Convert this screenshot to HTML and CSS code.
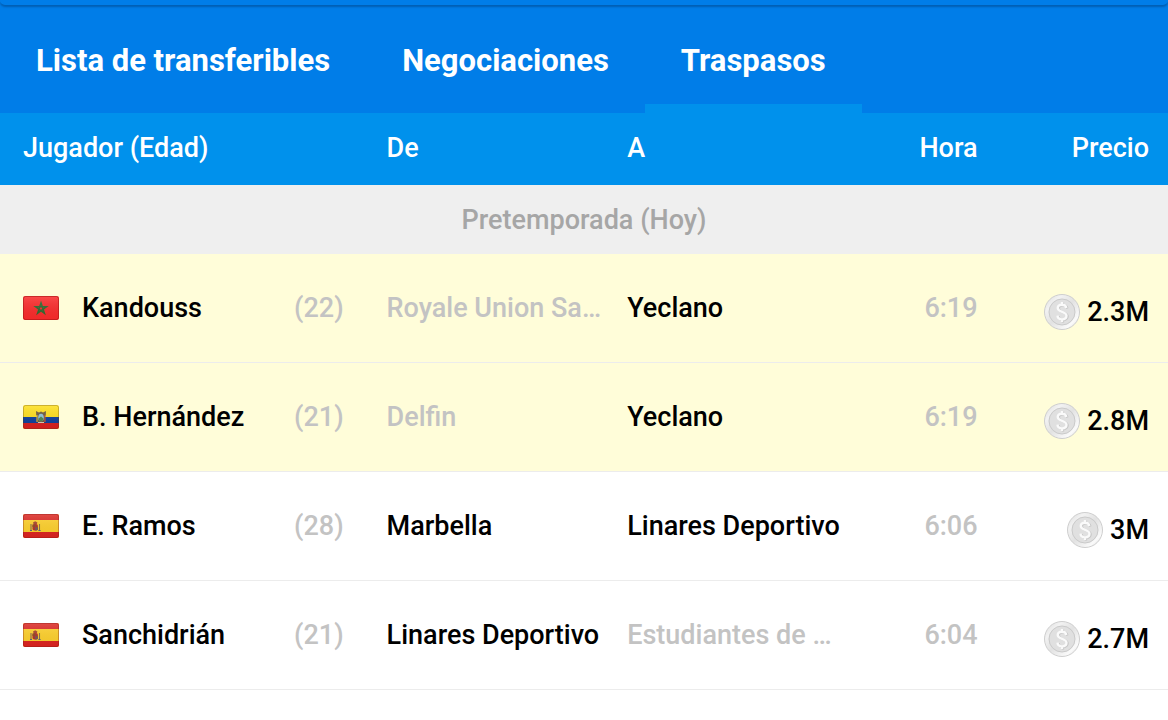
FILE: index.html
```
<!DOCTYPE html>
<html lang="es">
<head>
    <meta charset="utf-8">
    <title>Traspasos</title>
    <link rel="stylesheet" href="styles.css">
</head>
<body>
    <svg class="sprite" aria-hidden="true">
        <defs>
            <linearGradient id="gloss" x1="0" y1="0" x2="0" y2="1">
                <stop offset="0" stop-color="#fff" stop-opacity="0.15"/>
                <stop offset="1" stop-color="#000" stop-opacity="0.04"/>
            </linearGradient>
            <linearGradient id="rim" x1="0" y1="0" x2="1" y2="1">
                <stop offset="0" stop-color="#d8d8d8"/>
                <stop offset="0.25" stop-color="#f2f2f2"/>
                <stop offset="0.5" stop-color="#e2e2e2"/>
                <stop offset="0.8" stop-color="#fafafa"/>
                <stop offset="1" stop-color="#d0d0d0"/>
            </linearGradient>
            <clipPath id="flag-clip"><rect width="36" height="24" rx="2"/></clipPath>
        </defs>
        <symbol id="flag-ma" viewBox="0 0 36 24">
            <g clip-path="url(#flag-clip)">
                <rect width="36" height="24" fill="#fb2b2b"/>
                <path d="M18 6.8l3.4 10.4-8.8-6.4h10.8l-8.8 6.4z" fill="none" stroke="#2c6b2f" stroke-width="1.5"/>
                <rect width="36" height="24" fill="url(#gloss)"/>
                <rect x="0.5" y="0.5" width="35" height="23" rx="2" fill="none" stroke="#a81616" stroke-opacity="0.6"/>
            </g>
        </symbol>
        <symbol id="flag-ec" viewBox="0 0 36 24">
            <g clip-path="url(#flag-clip)">
                <rect width="36" height="24" fill="#ffe01c"/>
                <rect y="12" width="36" height="6" fill="#0c3f9c"/>
                <rect y="18" width="36" height="6" fill="#d8201f"/>
                <path d="M13 6l3 1.5 2-1 2 1 3-1.5-.2 4-1 1.5.7 5-2 1.5h-5l-2-1.5.7-5-1-1.5z" fill="#6d5a3c"/>
                <ellipse cx="18" cy="12.5" rx="2.8" ry="3.8" fill="#8fc3d9"/>
                <path d="M15.6 13.5l2.4-2 2.4 2-.8 2.4h-3.2z" fill="#4d8a4d"/>
                <path d="M14 10v7" stroke="#e6c23c" stroke-width="1"/>
                <path d="M22 10v7" stroke="#c9503a" stroke-width="1"/>
                <path d="M15 17.5h6" stroke="#d8d0b8" stroke-width="1"/>
                <rect width="36" height="24" fill="url(#gloss)"/>
                <rect x="0.5" y="0.5" width="35" height="23" rx="2" fill="none" stroke="#5a3a10" stroke-opacity="0.3"/>
            </g>
        </symbol>
        <symbol id="flag-es" viewBox="0 0 36 24">
            <g clip-path="url(#flag-clip)">
                <rect width="36" height="24" fill="#ffd12b"/>
                <rect width="36" height="6" fill="#dc2a25"/>
                <rect y="18" width="36" height="6" fill="#dc2420"/>
                <path d="M10 8.5l2.2-1.2 2.2 1.2-.6 1.5h-3.2z" fill="#a8452a"/>
                <rect x="9.5" y="10" width="5.4" height="6.5" rx="1.8" fill="#b33226"/>
                <path d="M12.2 13.2h2.7v2.5l-1.4.8h-1.3z" fill="#6d5a5c"/>
                <path d="M9.5 10.5h2.7v2.5H9.5z" fill="#8c4a22"/>
                <path d="M8 10v6.5M16.5 10v6.5" stroke="#8a6b4a" stroke-width="1.1"/>
                <path d="M7 16.5h2M15.4 16.5h2.2" stroke="#51618a"/>
                <rect width="36" height="24" fill="url(#gloss)"/>
                <rect x="0.5" y="0.5" width="35" height="23" rx="2" fill="none" stroke="#801a10" stroke-opacity="0.35"/>
            </g>
        </symbol>
        <symbol id="coin" viewBox="0 0 36 36">
            <circle cx="18" cy="18" r="17.5" fill="url(#rim)" stroke="#cecece"/>
            <circle cx="18" cy="18" r="13" fill="#e0e0e0" stroke="#cacaca"/>
            <path d="M22.3 14c-.3-2.2-2-3.2-4.3-3.2s-4.2 1.1-4.2 3.3c0 4.7 8.7 2.8 8.7 7.7 0 2.3-1.9 3.6-4.4 3.6s-4.4-1.2-4.6-3.7M18 8v3M18 25v3" transform="translate(1 .5)" fill="none" stroke="#c4c4c4" stroke-width="2.4"/>
            <path d="M22.3 14c-.3-2.2-2-3.2-4.3-3.2s-4.2 1.1-4.2 3.3c0 4.7 8.7 2.8 8.7 7.7 0 2.3-1.9 3.6-4.4 3.6s-4.4-1.2-4.6-3.7M18 8v3M18 25v3" fill="none" stroke="#fafafa" stroke-width="2.4"/>
        </symbol>
    </svg>

    <div class="header">
        <div class="header-edge"></div>
        <nav class="tabs">
            <a class="tab" href="#transferibles">Lista de transferibles</a>
            <a class="tab" href="#negociaciones">Negociaciones</a>
            <a class="tab active" href="#traspasos" aria-current="page">Traspasos</a>
        </nav>
    </div>

    <table class="transfers">
        <colgroup>
            <col class="col-player">
            <col class="col-club">
            <col class="col-club">
            <col class="col-time">
            <col class="col-price">
        </colgroup>
        <thead>
            <tr>
                <th>Jugador (Edad)</th>
                <th>De</th>
                <th>A</th>
                <th class="time">Hora</th>
                <th class="price">Precio</th>
            </tr>
        </thead>
        <tbody>
            <tr class="period">
                <th colspan="5">Pretemporada (Hoy)</th>
            </tr>
            <tr class="own">
                <td>
                    <div class="player">
                        <svg class="flag" role="img" aria-label="Marruecos"><use href="#flag-ma"/></svg>
                        <span class="name">Kandouss</span>
                        <span class="age">(22)</span>
                    </div>
                </td>
                <td class="muted">Royale Union Sa…</td>
                <td>Yeclano</td>
                <td class="time muted">6:19</td>
                <td class="price"><div class="amount"><svg class="coin"><use href="#coin"/></svg>2.3M</div></td>
            </tr>
            <tr class="own">
                <td>
                    <div class="player">
                        <svg class="flag" role="img" aria-label="Ecuador"><use href="#flag-ec"/></svg>
                        <span class="name">B. Hernández</span>
                        <span class="age">(21)</span>
                    </div>
                </td>
                <td class="muted">Delfin</td>
                <td>Yeclano</td>
                <td class="time muted">6:19</td>
                <td class="price"><div class="amount"><svg class="coin"><use href="#coin"/></svg>2.8M</div></td>
            </tr>
            <tr>
                <td>
                    <div class="player">
                        <svg class="flag" role="img" aria-label="España"><use href="#flag-es"/></svg>
                        <span class="name">E. Ramos</span>
                        <span class="age">(28)</span>
                    </div>
                </td>
                <td>Marbella</td>
                <td>Linares Deportivo</td>
                <td class="time muted">6:06</td>
                <td class="price"><div class="amount"><svg class="coin"><use href="#coin"/></svg>3M</div></td>
            </tr>
            <tr>
                <td>
                    <div class="player">
                        <svg class="flag" role="img" aria-label="España"><use href="#flag-es"/></svg>
                        <span class="name">Sanchidrián</span>
                        <span class="age">(21)</span>
                    </div>
                </td>
                <td>Linares Deportivo</td>
                <td class="muted">Estudiantes de …</td>
                <td class="time muted">6:04</td>
                <td class="price"><div class="amount"><svg class="coin"><use href="#coin"/></svg>2.7M</div></td>
            </tr>
        </tbody>
    </table>
</body>
</html>
```
FILE: styles.css
```
body {
    margin: 0;
    font-family: Roboto, "Liberation Sans", sans-serif;
    font-size: 27px;
    font-weight: 500;
    line-height: 32px;
    color: #000;
    background-color: #fff;
}
.sprite {
    display: block;
    width: 0;
    height: 0;
}
.header {
    background-color: #007de8;
}
.header-edge {
    height: 5px;
    border-radius: 0 0 12px 12px;
    box-shadow: 0 2px 2px rgba(0, 50, 100, 0.4);
}
.tabs {
    display: flex;
}
.tab {
    padding: 36px 36px 24px;
    border-bottom: 9px solid transparent;
    color: #fff;
    font-size: 31px;
    font-weight: 700;
    line-height: 39px;
    text-decoration: none;
    white-space: nowrap;
}
.tab.active {
    border-bottom-color: #0091ec;
}
.transfers {
    width: 100%;
    table-layout: fixed;
    border-collapse: collapse;
}
.col-player {
    width: 33.1%;
}
.col-club {
    width: 20.6%;
}
.col-time {
    width: 9.4%;
}
.transfers th,
.transfers td {
    padding: 0;
    text-align: left;
    white-space: nowrap;
}
.transfers th {
    font-weight: 500;
}
.transfers thead th {
    padding: 19px 0 21px;
    color: #fff;
    background-color: #0091ec;
}
.transfers th:first-child {
    padding-left: 23px;
}
.transfers .period th {
    padding: 19px 0 18px;
    color: #a6a6a6;
    background-color: #efefef;
    text-align: center;
}
.transfers td {
    height: 108px;
    border-bottom: 1px solid #ececec;
}
.own {
    background-color: #fffdd9;
}
.player {
    display: flex;
    align-items: center;
    padding: 0 43px 0 23px;
}
.flag {
    width: 36px;
    height: 24px;
    margin-right: 23px;
}
.name {
    flex: 1;
}
.age,
.transfers .muted {
    color: #c3c3c3;
}
.transfers .time {
    text-align: right;
}
.transfers .price {
    padding-right: 19px;
    text-align: right;
}
.amount {
    display: flex;
    align-items: center;
    justify-content: flex-end;
    gap: 7px;
    padding-top: 8px;
}
.coin {
    width: 36px;
    height: 36px;
}
```
